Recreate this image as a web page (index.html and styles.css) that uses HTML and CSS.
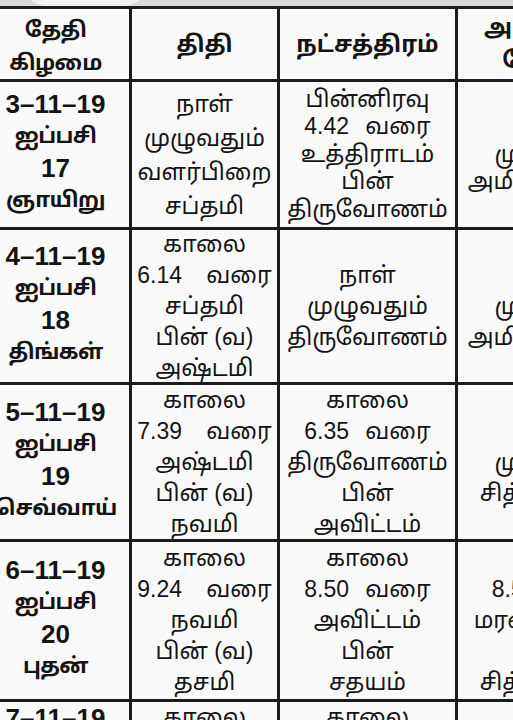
FILE: index.html
```html
<!DOCTYPE html>
<html lang="ta">
<head>
<meta charset="utf-8">
<title>பஞ்சாங்கம்</title>
<link rel="stylesheet" href="styles.css">
</head>
<body>
<div class="page">
  <div class="topbar"><div class="glare"></div></div>
  <div class="grid">
    <div class="cell head c1h"><div>தேதி</div><div>கிழமை</div></div>
    <div class="cell head"><div>திதி</div></div>
    <div class="cell head"><div>நட்சத்திரம்</div></div>
    <div class="cell head c4h"><div>அமிர்தாதி</div><div>யோகம்</div></div>

    <div class="cell c1"><div>3–11–19</div><div class="tm">ஐப்பசி</div><div>17</div><div class="tm">ஞாயிறு</div></div>
    <div class="cell body r1a"><div>நாள்</div><div>முழுவதும்</div><div>வளர்பிறை</div><div>சப்தமி</div></div>
    <div class="cell body tight"><div>பின்னிரவு</div><div><span class="sp2">4.42 வரை</span></div><div>உத்திராடம்</div><div>பின்</div><div>திருவோணம்</div></div>
    <div class="cell body tight"><div>நாள்</div><div>முழுவதும்</div><div>அமிர்தயோகம்</div></div>

    <div class="cell c1"><div>4–11–19</div><div class="tm">ஐப்பசி</div><div>18</div><div class="tm">திங்கள்</div></div>
    <div class="cell body"><div>காலை</div><div><span class="sp">6.14 வரை</span></div><div>சப்தமி</div><div>பின் (வ)</div><div>அஷ்டமி</div></div>
    <div class="cell body"><div>நாள்</div><div>முழுவதும்</div><div>திருவோணம்</div></div>
    <div class="cell body"><div>நாள்</div><div>முழுவதும்</div><div>அமிர்தயோகம்</div></div>

    <div class="cell c1"><div>5–11–19</div><div class="tm">ஐப்பசி</div><div>19</div><div class="tm">செவ்வாய்</div></div>
    <div class="cell body"><div>காலை</div><div><span class="sp">7.39 வரை</span></div><div>அஷ்டமி</div><div>பின் (வ)</div><div>நவமி</div></div>
    <div class="cell body"><div>காலை</div><div><span class="sp2">6.35 வரை</span></div><div>திருவோணம்</div><div>பின்</div><div>அவிட்டம்</div></div>
    <div class="cell body"><div>நாள்</div><div>முழுவதும்</div><div>சித்தயோகம்</div></div>

    <div class="cell c1"><div>6–11–19</div><div class="tm">ஐப்பசி</div><div>20</div><div class="tm">புதன்</div></div>
    <div class="cell body"><div>காலை</div><div><span class="sp">9.24 வரை</span></div><div>நவமி</div><div>பின் (வ)</div><div>தசமி</div></div>
    <div class="cell body"><div>காலை</div><div><span class="sp2">8.50 வரை</span></div><div>அவிட்டம்</div><div>பின்</div><div>சதயம்</div></div>
    <div class="cell body"><div>காலை</div><div><span class="sp2">8.50 வரை</span></div><div>மரணயோகம்</div><div>பின்</div><div>சித்தயோகம்</div></div>

    <div class="cell c1 last"><div>7–11–19</div></div>
    <div class="cell body last"><div>காலை</div></div>
    <div class="cell body last"><div>காலை</div></div>
    <div class="cell body last"><div>&nbsp;</div></div>
  </div>
</div>
</body>
</html>
```
FILE: styles.css
```css
html, body {
  margin: 0;
  padding: 0;
  background: #f4f4f4;
}
body {
  width: 513px;
  height: 720px;
  overflow: hidden;
  font-family: "Liberation Sans", "Noto Sans Tamil", "Lohit Tamil", "Noto Sans", sans-serif;
  color: #141414;
}
.page {
  display: flex;
  flex-direction: column;
  width: 513px;
  overflow: hidden;
}
.topbar {
  height: 6px;
  background: #d9d9d9;
  position: relative;
  overflow: hidden;
}
.glare {
  position: absolute;
  left: 30px;
  top: -14px;
  width: 110px;
  height: 24px;
  border-radius: 50%;
  background: #f2f2f2;
}
.grid {
  display: grid;
  grid-template-columns: 147px 145px 175px 194px;
  grid-template-rows: 70px 145px 152px 154px 157px 60px;
  gap: 3px;
  padding-top: 3px;
  margin-left: -18px;
  width: 670px;
  background: #1c1c1c;
}
.cell {
  background: #f9f9f9;
  display: flex;
  flex-direction: column;
  justify-content: center;
  align-items: center;
  text-align: center;
  white-space: nowrap;
}
.head {
  font-weight: 700;
  font-size: 23px;
  line-height: 33px;
}
.c1h {
  font-size: 21.5px;
  letter-spacing: -0.6px;
  padding-top: 5px;
}
.c4h {
  padding-right: 6px;
}
.c1 {
  font-weight: 700;
  font-size: 26px;
  line-height: 32px;
  padding-bottom: 5px;
}
.tm {
  font-size: 21.5px;
  letter-spacing: -0.6px;
}
.body {
  font-size: 23px;
  line-height: 31px;
}
.r1a {
  line-height: 34px;
}
.tight {
  line-height: 27.5px;
}
.sp {
  word-spacing: 18px;
}
.sp2 {
  word-spacing: 10px;
}
.last {
  justify-content: flex-start;
  padding-bottom: 0;
}
```
